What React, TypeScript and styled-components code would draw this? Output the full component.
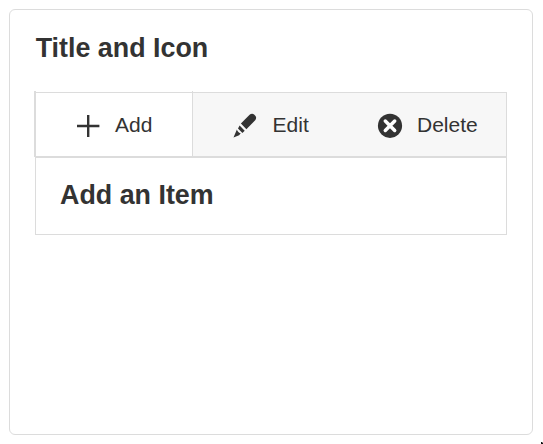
import React from "react";
import styled, { createGlobalStyle } from "styled-components";

const GlobalStyle = createGlobalStyle`
  html, body { margin: 0; background: #fff; overflow: hidden; }
  * { box-sizing: border-box; }
  body { font-family: "Liberation Sans", Arial, sans-serif; color: #333; }
`;

const Page = styled.main`
  width: 543px;
  height: 444px;
  padding: 9px 10px 9px 9px;
  position: relative;
`;

const Card = styled.section`
  height: 426px;
  border: 1px solid #dcdcdc;
  border-radius: 6px;
  padding: 22px 25px 0;
`;

const Heading = styled.h2<{ $inset?: boolean }>`
  margin: 0;
  padding-left: ${(p) => (p.$inset ? 0.7 : 0)}px;
  height: 32px;
  font-size: 26.85px;
  line-height: 32px;
  font-weight: 700;
  white-space: nowrap;
`;

const TabList = styled.div`
  display: grid;
  grid-template-columns: 158px 158px 156px;
  height: 65px;
  margin-top: 28px;
  background: #f7f7f7;
  border: 1px solid #dcdcdc;
  border-left: 0;
`;

const Tab = styled.button<{ $active?: boolean; $start: number; $gap: number }>`
  display: flex;
  align-items: center;
  gap: ${(p) => p.$gap}px;
  height: ${(p) => (p.$active ? 65 : 63)}px;
  margin: ${(p) => (p.$active ? "-2px 0 0 -1px" : "0")};
  padding: ${(p) => (p.$active ? 2 : 0)}px 0 0 ${(p) => p.$start}px;
  border: 0 solid #dcdcdc;
  border-left-width: ${(p) => (p.$active ? 2 : 0)}px;
  border-right-width: ${(p) => (p.$active ? 1 : 0)}px;
  background: ${(p) =>
    p.$active
      ? "linear-gradient(#dcdcdc, #dcdcdc) 0 1px / 100% 1px no-repeat #fff"
      : "transparent"};
  box-shadow: ${(p) => (p.$active ? "0 1px 0 #dcdcdc" : "none")};
  color: #333;
  font: 21px/24px "Liberation Sans", Arial, sans-serif;
  text-align: left;
`;

const Icon = styled.svg`
  display: block;
  flex: none;
  width: 26px;
  height: 26px;
  margin-top: 2px;
`;

const Panel = styled.div`
  height: 78px;
  padding: 21px 24px 0;
  border: 1px solid #dcdcdc;
`;

const Cursor = styled.svg`
  position: absolute;
  left: 541px;
  top: 442px;
  width: 2px;
  height: 2px;
`;

export default function App() {
  return (
    <Page>
      <GlobalStyle />
      <Card>
        <Heading $inset>Title and Icon</Heading>
        <TabList role="tablist">
          <Tab role="tab" aria-selected $active $start={39} $gap={14}>
            <Icon viewBox="0 0 26 26">
              <path d="M2 11.8h10V2h2.4v9.8h10v2.4h-10V24H12v-9.8H2z" fill="#333" />
            </Icon>
            Add
          </Tab>
          <Tab role="tab" $start={39} $gap={14.6}>
            <Icon viewBox="0 0 26 26">
              <path
                d="M8.9 10.6 17.6 1.8c1.3-1.2 3.2-1.4 4.5-.3l1.2 1.2c1.2 1.3 1.1 3.2-.1 4.5L14.4 16.2zM7.6 12.4l5.1 5.3-2.3 2.2-1.2-1.2-3.2-3.3zM4.9 16.4c.5 1.9 1.6 3.1 3.8 3.9l-1.6 1.9-5.6 2.3z"
                fill="#333"
              />
            </Icon>
            Edit
          </Tab>
          <Tab role="tab" $start={26} $gap={14}>
            <Icon viewBox="0 0 26 26">
              <circle cx="13" cy="12.8" r="12.1" fill="#333" />
              <path
                d="m8.3 8.1 9.4 9.4M17.7 8.1l-9.4 9.4"
                stroke="#fff"
                strokeWidth="3.5"
                strokeLinecap="round"
              />
            </Icon>
            Delete
          </Tab>
        </TabList>
        <Panel role="tabpanel">
          <Heading>Add an Item</Heading>
        </Panel>
      </Card>
      <Cursor viewBox="0 0 2 2">
        <path d="M0 0h1l1 1v1H0z" fill="#111" />
      </Cursor>
    </Page>
  );
}
